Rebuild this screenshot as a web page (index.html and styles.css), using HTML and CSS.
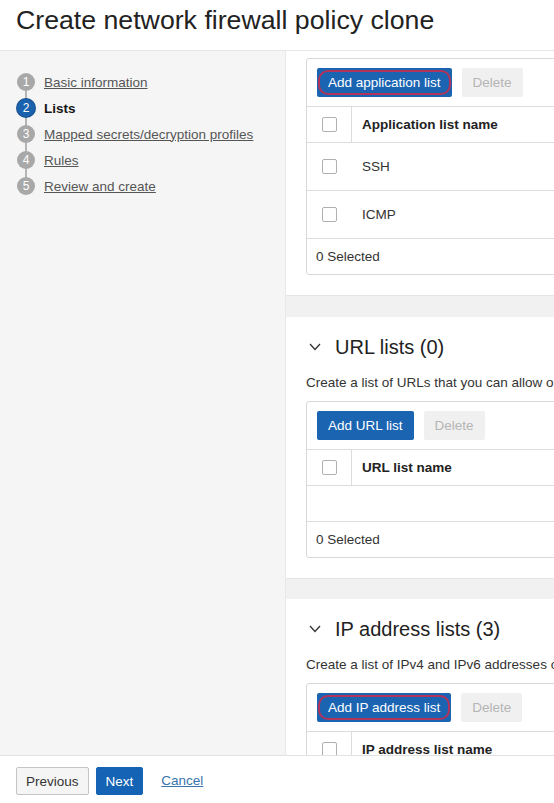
FILE: index.html
```html
<!DOCTYPE html>
<html lang="en">
<head>
<meta charset="utf-8">
<title>Create network firewall policy clone</title>
<link rel="stylesheet" href="styles.css">
</head>
<body>
<div class="page">
  <header class="top">
    <h1 class="title">Create network firewall policy clone</h1>
  </header>
  <div class="main">
    <aside class="steps">
      <ol class="step-list">
        <li class="step"><span class="num">1</span><a class="step-link" href="#">Basic information</a></li>
        <li class="step active"><span class="num">2</span><span class="step-current">Lists</span></li>
        <li class="step"><span class="num">3</span><a class="step-link" href="#">Mapped secrets/decryption profiles</a></li>
        <li class="step"><span class="num">4</span><a class="step-link" href="#">Rules</a></li>
        <li class="step"><span class="num">5</span><a class="step-link" href="#">Review and create</a></li>
      </ol>
    </aside>
    <section class="content">
      <div class="card card-first">
        <div class="tbl">
          <div class="toolbar">
            <button class="btn primary marked">Add application list<span class="mark"></span></button>
            <button class="btn disabled">Delete</button>
          </div>
          <div class="row head"><div class="cb-cell divided"><span class="cb"></span></div><div class="name">Application list name</div></div>
          <div class="row body"><div class="cb-cell"><span class="cb"></span></div><div class="cell">SSH</div></div>
          <div class="row body"><div class="cb-cell"><span class="cb"></span></div><div class="cell">ICMP</div></div>
          <div class="row foot">0 Selected</div>
        </div>
      </div>

      <div class="card">
        <h2 class="sec-title"><svg class="chev" width="12" height="8" viewBox="0 0 12 8"><polyline points="1,1 6,6.5 11,1" fill="none" stroke="#333" stroke-width="1.3"/></svg>URL lists (0)</h2>
        <p class="desc">Create a list of URLs that you can allow or deny in rules.</p>
        <div class="tbl">
          <div class="toolbar">
            <button class="btn primary">Add URL list</button>
            <button class="btn disabled">Delete</button>
          </div>
          <div class="row head"><div class="cb-cell divided"><span class="cb"></span></div><div class="name">URL list name</div></div>
          <div class="row empty"></div>
          <div class="row foot">0 Selected</div>
        </div>
      </div>

      <div class="card">
        <h2 class="sec-title"><svg class="chev" width="12" height="8" viewBox="0 0 12 8"><polyline points="1,1 6,6.5 11,1" fill="none" stroke="#333" stroke-width="1.3"/></svg>IP address lists (3)</h2>
        <p class="desc">Create a list of IPv4 and IPv6 addresses or CIDR blocks to use in rules.</p>
        <div class="tbl">
          <div class="toolbar">
            <button class="btn primary marked">Add IP address list<span class="mark"></span></button>
            <button class="btn disabled">Delete</button>
          </div>
          <div class="row head"><div class="cb-cell divided"><span class="cb"></span></div><div class="name">IP address list name</div></div>
        </div>
      </div>
    </section>
  </div>
  <footer class="bottom">
    <button class="fbtn secondary">Previous</button>
    <button class="fbtn next">Next</button>
    <a class="cancel" href="#">Cancel</a>
  </footer>
</div>
</body>
</html>
```

FILE: styles.css
```css
* { box-sizing: border-box; }
html, body { margin: 0; padding: 0; }
body {
  font-family: "Liberation Sans", Arial, sans-serif;
  color: #333;
  background: #fff;
}
.page {
  width: 554px;
  height: 803px;
  display: flex;
  flex-direction: column;
  overflow: hidden;
}
.top {
  height: 51px;
  flex: none;
  padding: 4px 0 0 16px;
  border-bottom: 1px solid #e6e6e6;
  background: #fff;
}
.title {
  margin: 0;
  font-size: 26.7px;
  line-height: 32px;
  font-weight: normal;
  color: #222;
  white-space: nowrap;
}
.main {
  flex: 1;
  display: flex;
  min-height: 0;
}
.steps {
  width: 286px;
  flex: none;
  background: #f5f5f5;
  border-right: 1px solid #e8e8e8;
  padding-top: 18px;
}
.step-list {
  list-style: none;
  margin: 0;
  padding: 0 0 0 17px;
}
.step {
  position: relative;
  display: flex;
  align-items: center;
  height: 26px;
  font-size: 13.5px;
}
.step + .step::before {
  content: "";
  position: absolute;
  left: 8px;
  top: -5px;
  width: 2px;
  height: 10px;
  background: #b5b5b5;
}
.num {
  position: relative;
  z-index: 1;
  width: 18px;
  height: 18px;
  border-radius: 50%;
  background: #a8a8a8;
  color: #fff;
  font-size: 12px;
  line-height: 18px;
  text-align: center;
  margin-right: 9px;
  flex: none;
}
.active .num { background: #1a62ad; box-shadow: 0 0 0 1px #164f8c; }
.step-link { color: #555; text-decoration: underline; }
.step-current { color: #161616; font-weight: bold; }

.content {
  flex: 1;
  min-width: 0;
  overflow: hidden;
  background: #f1f1f1;
}
.card {
  background: #fff;
  padding: 18px 0 20px 20px;
  border-bottom: 1px solid #e4e4e4;
  margin-bottom: 20px;
  overflow: hidden;
}
.card-first { padding-top: 7px; margin-bottom: 21px; }
.sec-title {
  margin: 0 0 14px 0;
  display: flex;
  align-items: center;
  font-size: 20px;
  line-height: 24px;
  font-weight: normal;
  color: #222;
  white-space: nowrap;
}
.chev { margin: 0 14px 0 3px; }
.desc {
  margin: 0 0 8px 0;
  font-size: 13.5px;
  line-height: 20px;
  color: #333;
  white-space: nowrap;
}
.tbl {
  width: 420px;
  border: 1px solid #d8d8d8;
  border-radius: 3px;
  background: #fff;
}
.toolbar {
  display: flex;
  gap: 10px;
  padding: 9px 10px;
  border-bottom: 1px solid #dcdcdc;
}
.btn {
  position: relative;
  height: 29px;
  padding: 0 11px;
  border: none;
  border-radius: 2px;
  font-family: inherit;
  font-size: 13.5px;
}
.primary { background: #1a64b2; color: #fff; }
.disabled { background: #f0f0f0; color: #b5b5b5; padding: 0 11px; }
.mark {
  position: absolute;
  left: 1px; right: 1px; top: 2px; bottom: 2px;
  border: 2px solid #b2345a;
  border-radius: 10px;
}
.row {
  display: flex;
  align-items: center;
  border-bottom: 1px solid #dcdcdc;
  font-size: 13.5px;
}
.row.head { height: 36px; }
.row.body { height: 48px; }
.row.empty { height: 36px; }
.row.foot { height: 35px; border-bottom: none; padding-left: 9px; color: #333; }
.cb-cell {
  width: 45px;
  height: 100%;
  display: flex;
  align-items: center;
  justify-content: center;
  flex: none;
}
.cb-cell.divided { border-right: 1px solid #dcdcdc; }
.cb {
  width: 15px;
  height: 15px;
  border: 1px solid #b0b0b0;
  border-radius: 2px;
  background: #fff;
}
.name { padding-left: 10px; font-weight: bold; color: #222; }
.cell { padding-left: 10px; color: #333; }

.bottom {
  height: 48px;
  flex: none;
  display: flex;
  align-items: flex-start;
  padding: 11px 16px 0;
  border-top: 1px solid #e2e2e2;
  background: #fff;
}
.fbtn {
  height: 28px;
  border-radius: 2px;
  font-family: inherit;
  font-size: 13.5px;
  padding: 0 9px;
}
.secondary { background: #f5f5f5; border: 1px solid #c4c4c4; color: #333; margin-right: 7px; }
.next { background: #1463b5; border: 1px solid #1463b5; color: #fff; margin-right: 18px; }
.cancel { color: #3a74ad; font-size: 13.5px; line-height: 28px; text-decoration: underline; }
```
